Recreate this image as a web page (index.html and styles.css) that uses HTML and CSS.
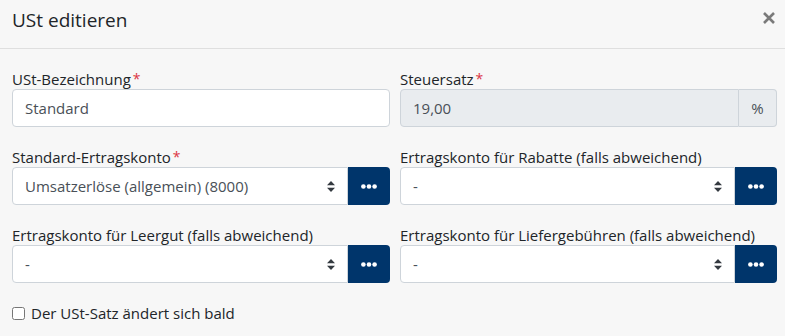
FILE: index.html
```html
<!DOCTYPE html>
<html lang="de">
<head>
    <meta charset="UTF-8">
    <meta name="viewport" content="width=device-width, initial-scale=1.0">
    <title>USt editieren</title>
    <link rel="stylesheet" href="styles.css">
</head>
<body>
    <div class="modal">
        <div class="modal-header">
            <h5 class="modal-title">USt editieren</h5>
            <button class="close" type="button" aria-label="Schließen">
                <svg width="12" height="12" viewBox="0 0 12 12"><path d="M1 1 L11 11 M11 1 L1 11" stroke="#7a7a7a" stroke-width="2.6" stroke-linecap="butt"/></svg>
            </button>
        </div>

        <div class="modal-body">
            <div class="form-row">
                <div class="form-group">
                    <label for="name">USt-Bezeichnung<span class="req">*</span></label>
                    <input type="text" id="name" class="form-control" value="Standard">
                </div>
                <div class="form-group">
                    <label for="rate">Steuersatz<span class="req">*</span></label>
                    <div class="input-group">
                        <input type="text" id="rate" class="form-control" value="19,00" disabled>
                        <span class="addon">%</span>
                    </div>
                </div>
            </div>

            <div class="form-row">
                <div class="form-group">
                    <label for="acc1">Standard-Ertragskonto<span class="req">*</span></label>
                    <div class="input-group">
                        <select id="acc1" class="custom-select">
                            <option>Umsatzerlöse (allgemein) (8000)</option>
                        </select>
                        <button class="btn-more" type="button"><svg width="16" height="5" viewBox="0 0 16 5"><circle cx="2.4" cy="2.5" r="2.3" fill="#fff"/><circle cx="8" cy="2.5" r="2.3" fill="#fff"/><circle cx="13.6" cy="2.5" r="2.3" fill="#fff"/></svg></button>
                    </div>
                </div>
                <div class="form-group">
                    <label for="acc2">Ertragskonto für Rabatte (falls abweichend)</label>
                    <div class="input-group">
                        <select id="acc2" class="custom-select">
                            <option>-</option>
                        </select>
                        <button class="btn-more" type="button"><svg width="16" height="5" viewBox="0 0 16 5"><circle cx="2.4" cy="2.5" r="2.3" fill="#fff"/><circle cx="8" cy="2.5" r="2.3" fill="#fff"/><circle cx="13.6" cy="2.5" r="2.3" fill="#fff"/></svg></button>
                    </div>
                </div>
            </div>

            <div class="form-row">
                <div class="form-group">
                    <label for="acc3">Ertragskonto für Leergut (falls abweichend)</label>
                    <div class="input-group">
                        <select id="acc3" class="custom-select">
                            <option>-</option>
                        </select>
                        <button class="btn-more" type="button"><svg width="16" height="5" viewBox="0 0 16 5"><circle cx="2.4" cy="2.5" r="2.3" fill="#fff"/><circle cx="8" cy="2.5" r="2.3" fill="#fff"/><circle cx="13.6" cy="2.5" r="2.3" fill="#fff"/></svg></button>
                    </div>
                </div>
                <div class="form-group">
                    <label for="acc4">Ertragskonto für Liefergebühren (falls abweichend)</label>
                    <div class="input-group">
                        <select id="acc4" class="custom-select">
                            <option>-</option>
                        </select>
                        <button class="btn-more" type="button"><svg width="16" height="5" viewBox="0 0 16 5"><circle cx="2.4" cy="2.5" r="2.3" fill="#fff"/><circle cx="8" cy="2.5" r="2.3" fill="#fff"/><circle cx="13.6" cy="2.5" r="2.3" fill="#fff"/></svg></button>
                    </div>
                </div>
            </div>

            <div class="form-check">
                <input type="checkbox" id="changes">
                <label for="changes">Der USt-Satz ändert sich bald</label>
            </div>
        </div>
    </div>
</body>
</html>
```

FILE: styles.css
```css
body {
    margin: 0;
    padding: 0;
    background: #f7f7f7;
    font-family: "Open Sans", "Noto Sans", sans-serif;
    color: #212529;
}
.modal {
    width: 785px;
    height: 336px;
    overflow: hidden;
}
.modal-header {
    display: flex;
    align-items: center;
    justify-content: space-between;
    height: 49px;
    box-sizing: border-box;
    padding: 0 9px 0 12px;
    border-bottom: 1px solid #dfdfdf;
}
.modal-title {
    margin: 0;
    font-size: 19px;
    font-weight: normal;
    line-height: 30px;
    margin-top: -9px;
}
.close {
    background: none;
    border: none;
    padding: 0;
    width: 14px;
    height: 14px;
    margin-top: -12px;
    margin-right: 0;
    cursor: pointer;
    display: flex;
    align-items: center;
    justify-content: center;
}
.modal-body {
    padding: 20px 8px 0 12px;
}
.form-row {
    display: grid;
    grid-template-columns: 378px 377px;
    column-gap: 10px;
    margin-bottom: 20px;
}
.form-group label {
    display: block;
    font-size: 15px;
    line-height: 20px;
    margin-bottom: 0;
    white-space: nowrap;
}
.req {
    color: #dc3545;
    margin-left: 2px;
    font-size: 14px;
    vertical-align: 1px;
}
.form-control,
.custom-select {
    display: block;
    width: 100%;
    height: 38px;
    box-sizing: border-box;
    padding: 0 12px;
    font-family: inherit;
    font-size: 15px;
    color: #495057;
    background: #fff;
    border: 1px solid #ced4da;
    border-radius: 4px;
    margin: 0;
}
.form-control:disabled {
    background: #e9ecef;
    color: #495057;
}
.input-group {
    display: flex;
}
.input-group .form-control,
.input-group .custom-select {
    flex: 1;
    min-width: 0;
    border-top-right-radius: 0;
    border-bottom-right-radius: 0;
}
.addon {
    display: flex;
    align-items: center;
    justify-content: center;
    width: 38px;
    height: 38px;
    box-sizing: border-box;
    font-size: 15px;
    color: #495057;
    background: #e9ecef;
    border: 1px solid #ced4da;
    border-left: none;
    border-radius: 0 4px 4px 0;
}
.custom-select {
    appearance: none;
    -webkit-appearance: none;
    background: #fff url("data:image/svg+xml,%3Csvg xmlns='http://www.w3.org/2000/svg' width='8' height='11' viewBox='0 0 8 11'%3E%3Cpath d='M4 0 L8 4.3 H0 Z M4 11 L0 6.7 H8 Z' fill='%23343a40'/%3E%3C/svg%3E") no-repeat right 12px center;
    background-size: 8px 11px;
    padding-right: 30px;
}
.btn-more {
    width: 42px;
    height: 38px;
    border: none;
    background: #00356b;
    border-radius: 0 4px 4px 0;
    display: flex;
    align-items: center;
    justify-content: center;
    padding: 0;
    cursor: pointer;
}
.form-check {
    display: flex;
    align-items: center;
    height: 24px;
    margin-top: -2px;
}
.form-check input {
    width: 13px;
    height: 13px;
    margin: 0 6px 0 0;
}
.form-check label {
    font-size: 15px;
    line-height: 24px;
}
```
